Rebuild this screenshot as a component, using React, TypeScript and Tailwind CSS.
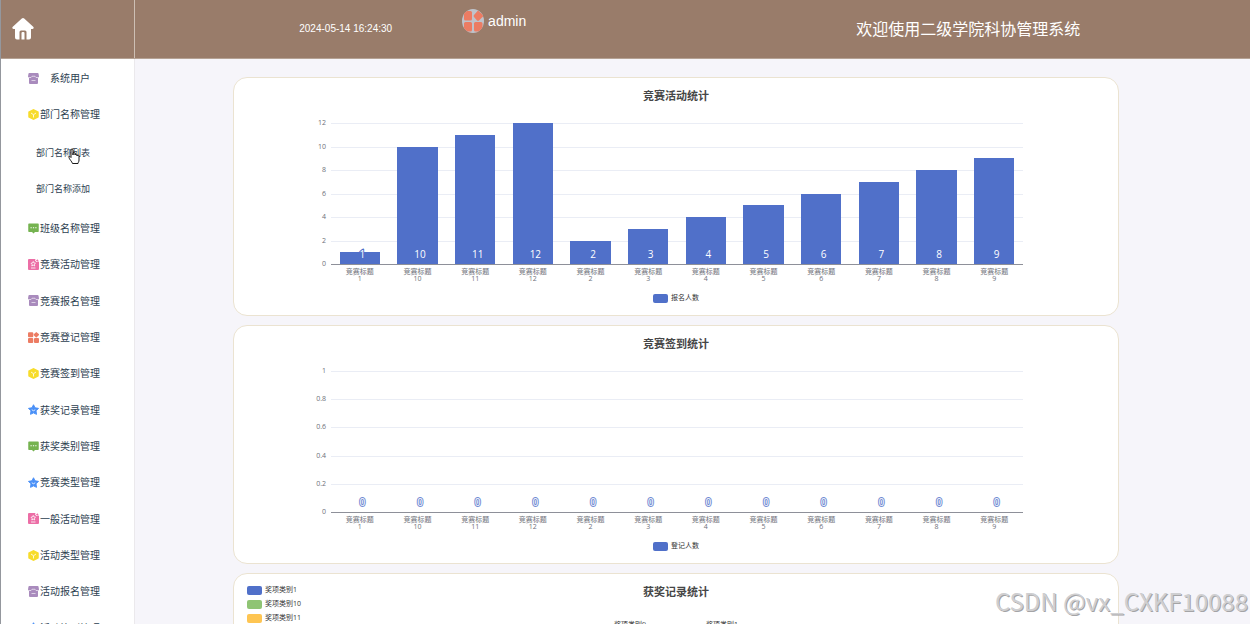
import type { ReactNode } from 'react'

type IconName = 'box' | 'cube' | 'chat' | 'doc' | 'grid' | 'star'

interface MenuItem {
 label: string
 icon: IconName
}

const MENU_TOP: MenuItem[] = [
 { label: '系统用户', icon: 'box' },
 { label: '部门名称管理', icon: 'cube' },
]

const SUBMENU = ['部门名称列表', '部门名称添加']

const MENU: MenuItem[] = [
 { label: '班级名称管理', icon: 'chat' },
 { label: '竞赛活动管理', icon: 'doc' },
 { label: '竞赛报名管理', icon: 'box' },
 { label: '竞赛登记管理', icon: 'grid' },
 { label: '竞赛签到管理', icon: 'cube' },
 { label: '获奖记录管理', icon: 'star' },
 { label: '获奖类别管理', icon: 'chat' },
 { label: '竞赛类型管理', icon: 'star' },
 { label: '一般活动管理', icon: 'doc' },
 { label: '活动类型管理', icon: 'cube' },
 { label: '活动报名管理', icon: 'box' },
 { label: '活动签到管理', icon: 'star' },
]

const TITULOS = ['1', '10', '11', '12', '2', '3', '4', '5', '6', '7', '8', '9']

const PREMIOS = [
 { label: '奖项类别1', color: 'bg-[#5070c9]' },
 { label: '奖项类别10', color: 'bg-[#8fc474]' },
 { label: '奖项类别11', color: 'bg-[#fec552]' },
]

const ICONS: Record<IconName, ReactNode> = {
 box: (
  <>
   <path fill="#a98bbd" d="M3 0h16a2 2 0 0 1 2 1l1 6a2 2 0 0 1-2 2v11a2 2 0 0 1-2 2H4a2 2 0 0 1-2-2V9a2 2 0 0 1-2-2l1-6a2 2 0 0 1 2-1z" />
   <path stroke="#fff" strokeOpacity="0.800" strokeWidth="1.500" fill="none" d="M2 9h4l2-2.500h6L16 9h4M7 15h8" />
  </>
 ),
 cube: (
  <>
   <path fill="#f7dc2b" d="M11 0l9 4.500a2 2 0 0 1 1.500 2v9a2 2 0 0 1-1.500 2L11 22l-9-4.500a2 2 0 0 1-1.500-2v-9a2 2 0 0 1 1.500-2z" />
   <path stroke="#fff" strokeWidth="1.600" fill="none" d="M6 8l5 3.500 5-3.500M11 11.500v5.500" />
  </>
 ),
 chat: (
  <>
   <path fill="#75b350" d="M2 1h18a1.500 1.500 0 0 1 1.500 1.500v14A1.500 1.500 0 0 1 20 18h-6l-3 3-3-3H2a1.500 1.500 0 0 1-1.500-1.500v-14A1.500 1.500 0 0 1 2 1z" />
   <path stroke="#fff" strokeWidth="2" d="M5 9.500h2.500M9.800 9.500h2.500M14.500 9.500H17" />
  </>
 ),
 doc: (
  <>
   <path fill="#ec6ea6" d="M2 0h13l-1 3 3 3 5-1v15a2 2 0 0 1-2 2H2a2 2 0 0 1-2-2V2a2 2 0 0 1 2-2z" />
   <path fill="#ec6ea6" d="M18.500 0l1 2 2 1-2 1-1 2-1-2-2-1 2-1z" />
   <path stroke="#fff" strokeWidth="1.600" fill="none" d="M10.500 5l1.500 3 3 .5-2.200 2.200.6 3.300-2.900-1.600L7.600 14l.6-3.300L6 8.500 9 8zM6 18h9" />
  </>
 ),
 grid: (
  <g fill="#ec7c63">
   <rect x="0" y="0.500" width="10.500" height="10" rx="2" />
   <path d="M16.500 0l5 4a1.500 1.500 0 0 1 0 2.500l-4 4a1.500 1.500 0 0 1-2 0l-4-4a1.500 1.500 0 0 1 0-2z" />
   <rect x="0" y="12" width="10.500" height="10" rx="2" />
   <rect x="12" y="12" width="10" height="10" rx="2" />
  </g>
 ),
 star: (
  <>
   <path
    fill="#4a90f7"
    stroke="#4a90f7"
    strokeWidth="2"
    strokeLinejoin="round"
    d="M11 1.500l3 6.200 7 1-5 5 1 7-6-3-6 3 1-7-5-5 7-1z"
   />
   <path stroke="#fff" strokeWidth="1.600" fill="none" d="M7.500 11.500q3.500 4 7 0" />
  </>
 ),
}

function MenuIcon({ name }: { name: IconName }) {
 return <svg viewBox="0 0 22 22" className="w-[11px] h-[11px] shrink-0" aria-hidden="true">{ICONS[name]}</svg>
}

function MenuLink({ item }: { item: MenuItem }) {
 return (
  <a href="#" className="flex h-full items-center gap-px pl-[27px]">
   <MenuIcon name={item.icon} />
   <span className="w-[60px] text-center">{item.label}</span>
  </a>
 )
}

function LegendMark({ color }: { color: string }) {
 return <span className={`h-[9px] w-[15px] rounded-xs ${color}`} />
}

function Card({ title, children }: { title: string; children: ReactNode }) {
 return (
  <section className="relative h-[239px] shrink-0 rounded-[14px] border border-[#ebe3d1] bg-white">
   <h2 className="pt-[10px] text-center text-[11px] leading-4 font-bold text-[#464646]">{title}</h2>
   {children}
  </section>
 )
}

interface ChartProps {
 title: string
 legend: string
 ticks: string[]
 max: number
 values: number[]
}

function BarChart({ title, legend, ticks, max, values }: ChartProps) {
 return (
  <Card title={title}>
   <div className="mt-[19px] grid grid-cols-[92px_1fr] gap-x-[5px] pr-[95px] text-[7px] text-[#6e7079]">
    <div className="-my-1 flex h-[149px] flex-col justify-between text-right leading-2">
     {ticks.map(t => <span key={t}>{t}</span>)}
    </div>
    <div className="relative h-[142px]">
     <div className="absolute inset-0 flex flex-col justify-between">
      {ticks.map(t => (
       <div key={t} className={t === '0' ? 'h-px bg-[#8e9099]' : 'h-px bg-[#eaedf5]'} />
      ))}
     </div>
     <div className="relative flex h-[141px]">
      {values.map((v, i) => (
       <div key={TITULOS[i]} className="relative flex flex-1 items-end justify-center">
        <div className="w-[70%] bg-[#5070c9]" style={{ height: `${(v / max) * 100}%` }} />
        <span className={`absolute inset-x-0 bottom-1 pl-[5px] text-center text-[10px] leading-3 text-white [-webkit-text-stroke:2px_#5070c9] [paint-order:stroke_fill] ${v === 0 ? 'opacity-80' : ''}`}>
         {v}
        </span>
       </div>
      ))}
     </div>
    </div>
    <div className="col-start-2 flex pt-[3px] text-center leading-[7px]">
     {TITULOS.map(n => (
      <div key={n} className="flex-1">竞赛标题<br />{n}</div>
     ))}
    </div>
   </div>
   <div className="mt-[10px] flex items-center justify-center gap-[3px] text-[7px] leading-3 text-[#333]">
    <LegendMark color="bg-[#5070c9]" />
    {legend}
   </div>
  </Card>
 )
}

export default function App() {
 return (
  <div className="relative flex h-screen flex-col overflow-hidden border-l border-[#94979d] bg-[#f6f5fa] font-['Open_Sans','Noto_Sans_CJK_SC',sans-serif]">
   <header className="flex h-[59px] shrink-0 border-b border-[#b5a294] bg-[#997c6a] text-white">
    <div className="flex w-[134px] shrink-0 items-center border-r border-[#cdbfb4] pl-[11px]">
     <a href="#" aria-label="首页">
      <svg viewBox="0 0 22 22" className="h-[22px] w-[22px]" fill="#fff">
       <path d="M9.800 0.500a2 2 0 0 1 2.400 0l9 8.200a1.300 1.300 0 0 1-.9 2.300H19v8.500a2 2 0 0 1-2 2h-2.500V14a1.500 1.500 0 0 0-1.500-1.500H9A1.500 1.500 0 0 0 7.500 14v7.500H5a2 2 0 0 1-2-2V11H1.700a1.300 1.300 0 0 1-.9-2.300z" />
       <path d="M9.500 21.500V15a1 1 0 0 1 1-1h1a1 1 0 0 1 1 1v6.500z" />
      </svg>
     </a>
    </div>
    <div className="grid flex-1 grid-cols-2 pr-1 font-['Liberation_Sans','Noto_Sans_CJK_SC',sans-serif]">
     <div className="flex items-center justify-center gap-[70px]">
      <time className="text-[10px] leading-4">2024-05-14 16:24:30</time>
      <div className="flex items-center gap-1 self-start pt-[9px]">
       <svg viewBox="0 0 22 24" className="h-6 w-[22px]" aria-hidden="true">
        <clipPath id="avatar"><ellipse cx="11" cy="12" rx="11" ry="12" /></clipPath>
        <g clipPath="url(#avatar)">
         <rect width="22" height="24" fill="#bfc3cb" />
         <g fill="#ec7c63">
          <rect x="2" y="2" width="8" height="9.500" rx="1.500" />
          <path d="M16 1.500l5 4.500a1 1 0 0 1 0 1.500l-4 4a1.500 1.500 0 0 1-2 0l-3-3.500a1.500 1.500 0 0 1 0-2z" />
          <rect x="2" y="13" width="8" height="9.500" rx="1.500" />
          <rect x="12" y="13" width="8.500" height="9.500" rx="1.500" />
         </g>
        </g>
       </svg>
       <span className="text-sm">admin</span>
      </div>
     </div>
     <h1 className="flex items-center justify-center pt-0.5 text-[16px]">欢迎使用二级学院科协管理系统</h1>
    </div>
   </header>

   <div className="flex min-h-0 flex-1">
    <nav className="w-[134px] shrink-0 border-r border-[#ebe9ec] bg-white pt-px text-[10px] leading-4 text-[#2c3e50]">
     <ul>
      {MENU_TOP.map(m => <li key={m.label} className="h-9"><MenuLink item={m} /></li>)}
     </ul>
     <ul className="relative pt-[3px] pb-[3px] text-[9px]">
      {SUBMENU.map(s => (
       <li key={s} className="h-9">
        <a href="#" className="flex h-full items-center pl-[35px]">{s}</a>
       </li>
      ))}
      <li className="pointer-events-none absolute top-4 left-[67px]" aria-hidden="true">
       <svg viewBox="0 0 12 16" className="h-4 w-3">
        <path
         d="M3 9V2a1 1 0 0 1 2 0v5V5.500a1 1 0 0 1 2 0V7a1 1 0 0 1 2 0v1a1 1 0 0 1 2 0v4c0 2-1 2.500-1 3.500H4.500C4 13.500 1 11 1 9.500 1 8.500 2 8 3 9.500z"
         fill="#fff"
         stroke="#000"
         strokeWidth="0.900"
        />
       </svg>
      </li>
     </ul>
     <ul className="grid h-[436px] auto-rows-fr">
      {MENU.map(m => <li key={m.label}><MenuLink item={m} /></li>)}
     </ul>
    </nav>

    <main className="flex flex-1 flex-col gap-[9px] overflow-hidden pt-[18px] pr-[131px] pl-[98px]">
     <BarChart
      title="竞赛活动统计"
      legend="报名人数"
      ticks={['12', '10', '8', '6', '4', '2', '0']}
      max={12}
      values={[1, 10, 11, 12, 2, 3, 4, 5, 6, 7, 8, 9]}
     />
     <BarChart
      title="竞赛签到统计"
      legend="登记人数"
      ticks={['1', '0.8', '0.6', '0.4', '0.2', '0']}
      max={1}
      values={[0, 0, 0, 0, 0, 0, 0, 0, 0, 0, 0, 0]}
     />
     <Card title="获奖记录统计">
      <ul className="absolute top-[9px] left-[13px] text-[7px] text-[#333]">
       {PREMIOS.map(p => (
        <li key={p.label} className="flex h-[14px] items-center gap-[3px]">
         <LegendMark color={p.color} />
         {p.label}
        </li>
       ))}
      </ul>
      <div className="mt-[19px] flex justify-center gap-[60px] text-[7px] leading-3 text-[#333]">
       <span>奖项类别9</span>
       <span>奖项类别1</span>
      </div>
     </Card>
    </main>
   </div>

   <div className="pointer-events-none absolute right-0.5 bottom-[7px] font-['Noto_Sans_CJK_SC',sans-serif] text-2xl leading-8 text-[#cfcfd1] [text-shadow:1px_1px_0_#a4a4a6]">
    CSDN @vx_CXKF10088
   </div>
  </div>
 )
}
